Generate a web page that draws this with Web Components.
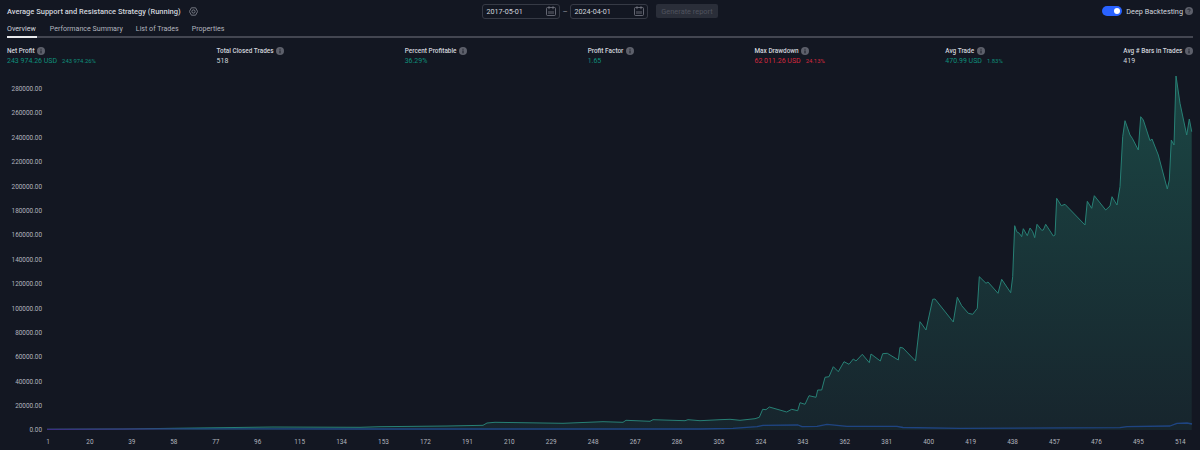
<!DOCTYPE html>
<html>
<head>
<meta charset="utf-8">
<title>Strategy report</title>
<style>
  html, body {
    margin: 0;
    height: 450px;
    overflow: hidden;
    background: #131722;
    color: #d1d4dc;
    font-family: Roboto, "Noto Sans", sans-serif;
  }
</style>
</head>
<body>
<report-app></report-app>

<script>
class InfoIcon extends HTMLElement {
  constructor() {
    super();
    this.root = this.attachShadow({ mode: "open" });
  }

  connectedCallback() {
    const glyph = this.getAttribute("kind") === "help"
      ? `<path d="M3.4 3.7c0-.9.7-1.3 1.6-1.3s1.6.5 1.6 1.3c0 1.2-1.6 1.2-1.6 2.3" fill="none" stroke="#131722" stroke-width=".9"/><circle cx="5" cy="7.6" r=".6" fill="#131722"/>`
      : `<rect x="4.4" y="4.3" width="1.2" height="3.6" fill="#131722"/><rect x="4.4" y="2.2" width="1.2" height="1.2" fill="#131722"/>`;
    this.root.innerHTML = `
      <style>
        :host { display: inline-flex; width: 8px; height: 8px; }
        svg { width: 100%; height: 100%; display: block; }
      </style>
      <svg viewBox="0 0 10 10"><circle cx="5" cy="5" r="5" fill="#5d606b"/>${glyph}</svg>`;
  }
}

class DateField extends HTMLElement {
  constructor() {
    super();
    this.root = this.attachShadow({ mode: "open" });
  }

  connectedCallback() {
    this.root.innerHTML = `
      <style>
        :host {
          display: flex;
          align-items: center;
          justify-content: space-between;
          box-sizing: border-box;
          width: 78px;
          height: 15px;
          padding: 0 3px 0 3.5px;
          border: 1px solid #363a45;
          border-radius: 3px;
          font-size: 7.2px;
          color: #d1d4dc;
        }
        svg { width: 10px; height: 10px; display: block; }
      </style>
      <slot></slot>
      <svg viewBox="0 0 10 10" fill="none" stroke="#787b86" stroke-width=".8">
        <rect x=".5" y="1.5" width="9" height="8" rx="1"/>
        <path d="M3 .2v3M7 .2v3M3 5v3M5 5v3M7 5v3"/>
      </svg>`;
  }
}

class ReportHeader extends HTMLElement {
  constructor() {
    super();
    this.root = this.attachShadow({ mode: "open" });
  }

  connectedCallback() {
    this.root.innerHTML = `
      <style>
        :host {
          display: grid;
          grid-template-columns: 1fr auto 1fr;
          align-items: center;
          height: 22px;
          box-sizing: border-box;
          padding: 0 7px;
        }
        .title { display: flex; align-items: center; gap: 8px; font-size: 7.5px; font-weight: 500; color: #d1d4dc; white-space: nowrap; }
        .title svg { width: 9px; height: 9px; display: block; }
        .range { display: flex; align-items: center; }
        .dash { width: 10px; text-align: center; font-size: 8px; color: #9598a1; }
        button {
          margin-left: 8px;
          width: 62px;
          height: 14px;
          padding: 0;
          border: 0;
          border-radius: 2px;
          background: #2a2e39;
          color: #50535e;
          font: 7.4px Roboto, sans-serif;
        }
        .deep { display: flex; align-items: center; justify-content: flex-end; gap: 4px; font-size: 7.3px; color: #d1d4dc; white-space: nowrap; }
        .toggle { position: relative; width: 20px; height: 10px; border-radius: 5px; background: #2962ff; }
        .toggle::after { content: ""; position: absolute; top: 2px; right: 2px; width: 6px; height: 6px; border-radius: 50%; background: #fff; }
        .deep info-icon { margin-left: -2px; }
      </style>
      <div class="title">
        <span>Average Support and Resistance Strategy (Running)</span>
        <svg viewBox="0 0 10 10" fill="none" stroke="#9598a1" stroke-width=".8">
          <path d="M2.7.9h4.6L9.6 5 7.3 9.1H2.7L.4 5z"/>
          <circle cx="5" cy="5" r="1.8"/>
        </svg>
      </div>
      <div class="range">
        <date-field>2017-05-01</date-field>
        <span class="dash">–</span>
        <date-field>2024-04-01</date-field>
        <button>Generate report</button>
      </div>
      <div class="deep">
        <span class="toggle"></span>
        <span>Deep Backtesting</span>
        <info-icon kind="help"></info-icon>
      </div>`;
  }
}

class TabBar extends HTMLElement {
  constructor() {
    super();
    this.root = this.attachShadow({ mode: "open" });
  }

  connectedCallback() {
    const tabs = ["Overview", "Performance Summary", "List of Trades", "Properties"];
    this.root.innerHTML = `
      <style>
        :host {
          display: flex;
          gap: 13px;
          height: 14px;
          margin: 0 7px;
          border-bottom: 2px solid #434651;
          font-size: 7.1px;
          color: #b2b5be;
        }
        span { position: relative; line-height: 13px; white-space: nowrap; }
        .active { color: #d1d4dc; padding-right: 1px; }
        .active::after { content: ""; position: absolute; left: 0; right: 0; top: 14px; height: 2px; background: #e8e9ec; }
      </style>
      ${tabs.map((t, i) => `<span class="${i === 0 ? "active" : ""}">${t}</span>`).join("")}`;
  }
}

class StatItem extends HTMLElement {
  constructor() {
    super();
    this.root = this.attachShadow({ mode: "open" });
  }

  connectedCallback() {
    const tone = this.getAttribute("tone") || "plain";
    const color = { plain: "#d1d4dc", up: "#0f8f7b", down: "#d5293f" }[tone];
    const label = this.getAttribute("label");
    const pct = this.getAttribute("pct");
    this.root.innerHTML = `
      <style>
        :host { display: block; white-space: nowrap; }
        .label { display: flex; align-items: center; gap: 2.5px; height: 10px; font-size: 6.45px; font-weight: 500; color: #d1d4dc; }
        .value { display: flex; align-items: baseline; gap: 5px; height: 11px; line-height: 11px; font-size: 7px; color: ${color}; }
        small { font-size: 5.9px; }
      </style>
      <div class="label"><span>${label}</span><info-icon></info-icon></div>
      <div class="value"><span><slot></slot></span>${pct ? `<small>${pct}</small>` : ""}</div>`;
  }
}

class StatRow extends HTMLElement {
  constructor() {
    super();
    this.root = this.attachShadow({ mode: "open" });
    this.root.innerHTML = `
      <style>
        :host { display: flex; justify-content: space-between; padding: 8px 7px 0; }
      </style>
      <slot></slot>`;
  }
}

// pixel samples of the curves, in page coordinates
const EQUITY = [[47,429.3],[123,429],[173,428.3],[273,427],[360,427.3],[380,426.7],[447,426],[483,425.3],[487,423],[495,422.3],[563,423.3],[603,421.7],[623,422.3],[626,420.3],[650,421.3],[653,419.7],[685,420.7],[688,419.7],[700,420.7],[720,419.7],[730,419.3],[740,420.3],[755,418.7],[759.3,417.3],[762.7,409.3],[766,409.7],[769.3,407],[786.7,412],[791.7,409.3],[797.7,410.7],[800,402.7],[805,404.3],[809,395.7],[816,397.3],[817.7,390],[821.7,390],[825,377.3],[829,376.7],[833.3,366.7],[838.3,371.7],[844,361.7],[849,364.3],[853.3,359],[856,361],[862.3,354.3],[869.3,362.7],[871,354],[880.3,361],[882.7,353.7],[887.3,353.3],[898.3,360],[900,347.3],[903,348],[915.5,361],[920,321.7],[926,330],[932.7,299.3],[935,299],[953.3,322],[957.3,297.3],[961.7,305.7],[968.3,313.3],[972.7,314.3],[977.3,308.3],[979.3,276.7],[986,283.3],[988,282],[998,293.3],[1001.7,279.3],[1010.7,292.7],[1012.7,276.7],[1013.3,260],[1014.7,225.7],[1016.7,231.7],[1019.3,233.3],[1021.7,236.7],[1023.3,228.7],[1027.3,235.7],[1030,228],[1032.7,231.7],[1034.7,237.7],[1037,224.3],[1041.7,230.3],[1043.3,230],[1045.7,224.3],[1053.3,236],[1055,235],[1056.7,198.3],[1061.3,205.7],[1065,204.3],[1085,225],[1087.3,201.3],[1091.7,208.3],[1094.3,195.7],[1105.7,210],[1110,206],[1112,196.7],[1117,205],[1120,186.7],[1122.7,136.7],[1125,120.7],[1130,135],[1132.3,138.3],[1138.3,150],[1140.7,116.7],[1143.3,120],[1150,140.7],[1152,139],[1158.3,155],[1167.3,189],[1169.3,180],[1171.3,140],[1174,145],[1176,76],[1180,103.3],[1186.7,135],[1189.3,119],[1191.7,131.7]];

const DRAWDOWN = [[47,429.4],[173,428.8],[370,429],[700,429],[733,428.3],[757,426.7],[763,425.3],[798,425],[802,426.7],[817,426.3],[827,424.3],[847,426.3],[897,426.3],[903,427.5],[960,428.3],[1120,427.7],[1127,426.7],[1170,426],[1177,423.3],[1187,423],[1192,424]];

class EquityChart extends HTMLElement {
  constructor() {
    super();
    this.root = this.attachShadow({ mode: "open" });
  }

  connectedCallback() {
    const line = (pts) => pts.map((p, i) => `${i ? "L" : "M"}${p[0]} ${p[1]}`).join("");
    const ticks = [];
    for (let v = 280000; v >= 0; v -= 20000) ticks.push(v.toFixed(2));
    const bars = [];
    for (let n = 1; n <= 514; n += 19) bars.push(n);

    this.root.innerHTML = `
      <style>
        :host {
          display: grid;
          grid-template-columns: 47px 1153px;
          grid-template-rows: 366px 14px;
          margin-top: 3px;
          font-size: 6.4px;
          color: #b2b5be;
        }
        .y {
          display: flex;
          flex-direction: column;
          padding: 7px 5px 0 0;
          text-align: right;
        }
        .y span { height: 24.4px; line-height: 24.4px; flex: none; }
        svg { display: block; width: 1153px; height: 365px; }
        .x {
          grid-column: 2;
          display: flex;
          margin-left: -20px;
          line-height: 13px;
        }
        .x span { flex: none; width: 41.94px; text-align: center; }
      </style>
      <div class="y">${ticks.map((t) => `<span>${t}</span>`).join("")}</div>
      <svg viewBox="47 70 1153 365" fill="none">
        <defs>
          <linearGradient id="area" gradientUnits="userSpaceOnUse" x1="0" y1="76" x2="0" y2="430">
            <stop offset="0" stop-color="#1b4644"/>
            <stop offset="1" stop-color="#17252d"/>
          </linearGradient>
          <linearGradient id="dd" gradientUnits="userSpaceOnUse" x1="47" y1="0" x2="300" y2="0">
            <stop offset="0" stop-color="#3c2f82"/>
            <stop offset=".35" stop-color="#332f7c"/>
            <stop offset=".6" stop-color="#1f4f86"/>
            <stop offset="1" stop-color="#1e4482"/>
          </linearGradient>
        </defs>
        <path d="${line(EQUITY)}L1191.7 430L47 430Z" fill="url(#area)"/>
        <path d="${line(EQUITY)}" stroke="#278075" stroke-width="1" stroke-linejoin="round"/>
        <path d="${line(DRAWDOWN)}" stroke="url(#dd)" stroke-width="1.3" stroke-linejoin="round"/>
      </svg>
      <div class="x">${bars.map((b) => `<span>${b}</span>`).join("")}</div>`;
  }
}

class ReportApp extends HTMLElement {
  constructor() {
    super();
    this.root = this.attachShadow({ mode: "open" });
  }

  connectedCallback() {
    this.root.innerHTML = `
      <style>
        :host { display: block; width: 1200px; height: 450px; overflow: hidden; }
      </style>
      <report-header></report-header>
      <tab-bar></tab-bar>
      <stat-row>
        <stat-item label="Net Profit" tone="up" pct="243 974.26%">243 974.26 USD</stat-item>
        <stat-item label="Total Closed Trades">518</stat-item>
        <stat-item label="Percent Profitable" tone="up">36.29%</stat-item>
        <stat-item label="Profit Factor" tone="up">1.65</stat-item>
        <stat-item label="Max Drawdown" tone="down" pct="24.13%">62 011.26 USD</stat-item>
        <stat-item label="Avg Trade" tone="up" pct="1.83%">470.99 USD</stat-item>
        <stat-item label="Avg # Bars in Trades">419</stat-item>
      </stat-row>
      <equity-chart></equity-chart>`;
  }
}

customElements.define("info-icon", InfoIcon);
customElements.define("date-field", DateField);
customElements.define("report-header", ReportHeader);
customElements.define("tab-bar", TabBar);
customElements.define("stat-item", StatItem);
customElements.define("stat-row", StatRow);
customElements.define("equity-chart", EquityChart);
customElements.define("report-app", ReportApp);
</script>
</body>
</html>
